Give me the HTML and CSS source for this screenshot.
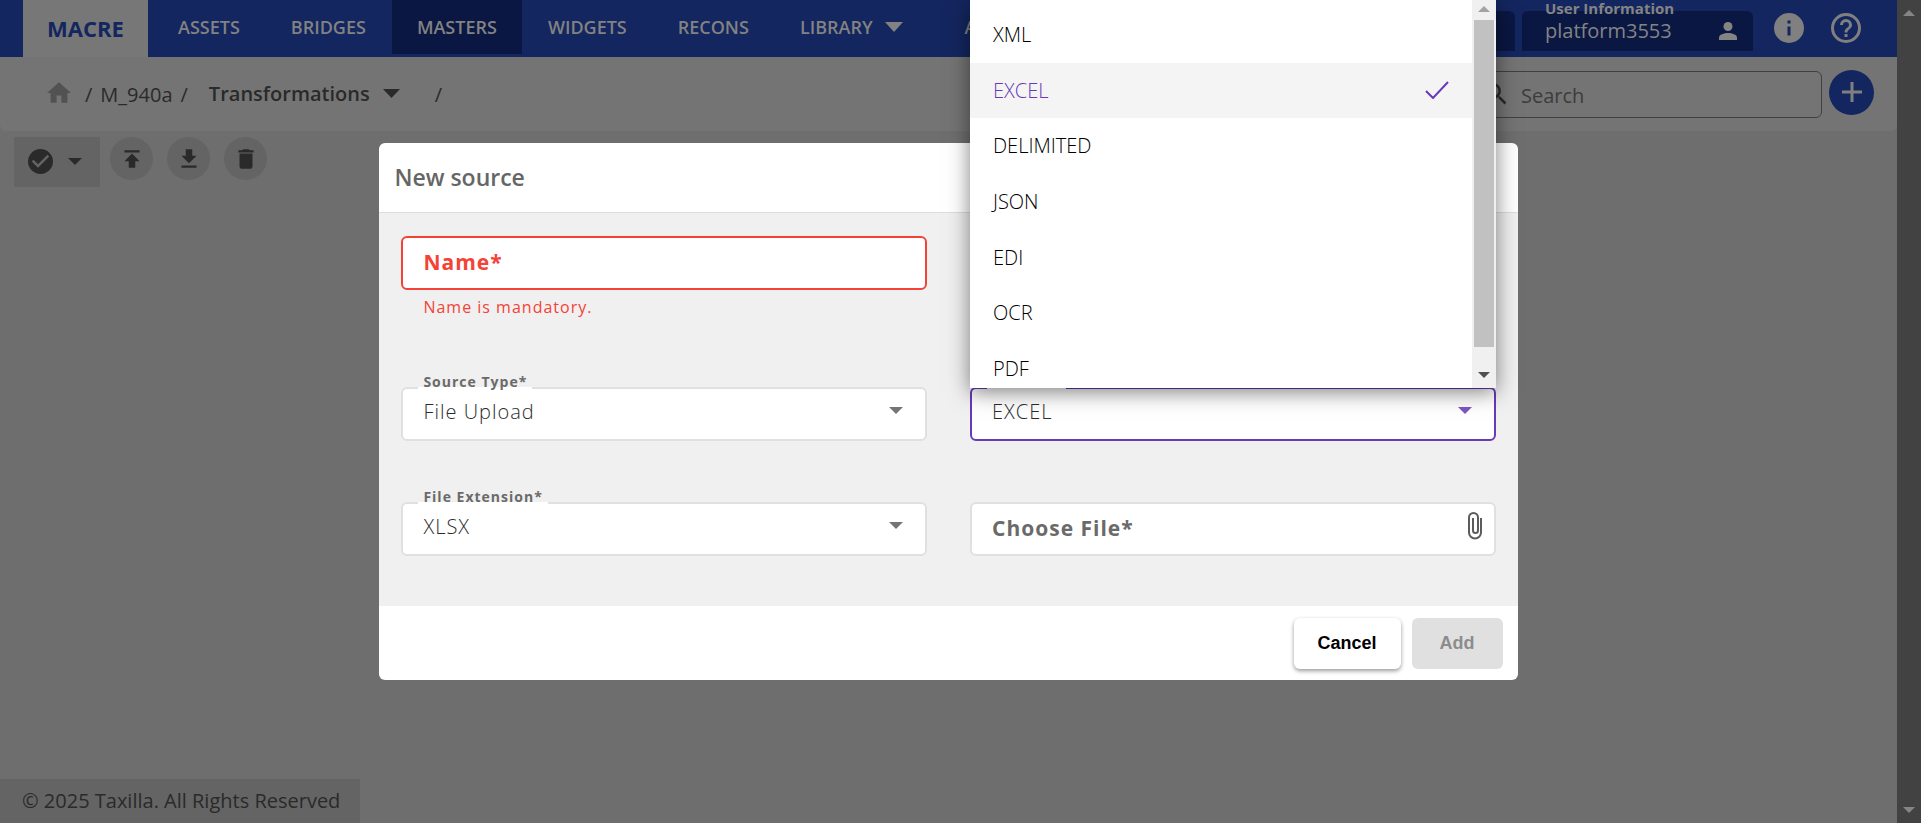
FILE: index.html
```html
<!DOCTYPE html>
<html lang="en">
<head>
<meta charset="utf-8">
<title>Masters - New source</title>
<link rel="stylesheet" href="styles.css">
</head>
<body>
<div class="shell">
  <div class="page">
    <header class="topbar">
      <a class="brand" href="#">MACRE</a>
      <nav class="nav">
        <a class="nav-link" href="#">ASSETS</a>
        <a class="nav-link" href="#">BRIDGES</a>
        <a class="nav-link nav-link-active" href="#">MASTERS</a>
        <a class="nav-link" href="#">WIDGETS</a>
        <a class="nav-link" href="#">RECONS</a>
        <a class="nav-link nav-link-menu" href="#">LIBRARY
          <svg width="18" height="10" viewBox="0 0 18 10"><path d="M0 0h18L9 10z" fill="currentColor"/></svg></a>
        <a class="nav-link" href="#">A</a>
      </nav>
      <div class="account">
        <div class="chip chip-blank"></div>
        <div class="chip">
          <span class="chip-label">User Information</span>
          <span class="chip-value">platform3553</span>
          <svg width="18" height="18" viewBox="0 0 18 18" fill="currentColor"><circle cx="9" cy="4.5" r="4.5"/><path d="M0 18v-2.500C0 12.500 5 11 9 11s9 1.500 9 4.500V18z"/></svg>
        </div>
        <button class="round-icon" type="button" aria-label="Information"><svg width="30" height="30" viewBox="2 2 20 20" fill="currentColor"><path d="M12 2a10 10 0 1 0 0 20 10 10 0 0 0 0-20zm1 15h-2v-6h2zm0-8h-2V7h2z"/></svg></button>
        <button class="round-icon" type="button" aria-label="Help"><svg width="30" height="30" viewBox="2 2 20 20" fill="currentColor"><path d="M11 18h2v-2h-2zm1-16a10 10 0 1 0 0 20 10 10 0 0 0 0-20zm0 18a8 8 0 1 1 0-16 8 8 0 0 1 0 16zm0-14a4 4 0 0 0-4 4h2a2 2 0 1 1 4 0c0 2-3 1.750-3 5h2c0-2.250 3-2.500 3-5a4 4 0 0 0-4-4z"/></svg></button>
      </div>
    </header>

    <div class="crumbbar">
      <div class="crumbs">
        <a class="home" href="#" aria-label="Home"><svg width="24" height="21" viewBox="2 3 20 17" fill="currentColor"><path d="M10 20v-6h4v6h5v-8h3L12 3 2 12h3v8z"/></svg></a>
        <span class="slash">/</span>
        <a class="crumb" href="#">M_940a</a>
        <span class="slash">/</span>
        <button class="crumb-menu" type="button">Transformations
          <svg width="17" height="9" viewBox="0 0 17 9"><path d="M0 0h17L8.500 9z" fill="currentColor"/></svg></button>
        <span class="slash">/</span>
      </div>
      <div class="search">
        <svg width="22" height="22" viewBox="3 3 18 18" fill="currentColor"><path d="M15.500 14h-.79l-.28-.27A6.470 6.470 0 0 0 16 9.500 6.500 6.500 0 1 0 9.500 16c1.610 0 3.090-.59 4.230-1.570l.27.28v.79l5 4.990L20.490 19zm-6 0a4.500 4.500 0 1 1 0-9 4.500 4.500 0 0 1 0 9z"/></svg>
        <input class="search-input" type="text" placeholder="Search" aria-label="Search">
      </div>
      <button class="plus" type="button" aria-label="Add"><svg width="22" height="22" viewBox="0 0 22 22" stroke="currentColor" stroke-width="3"><path d="M11 1v20M1 11h20"/></svg></button>
    </div>

    <div class="tools">
      <button class="select-all" type="button" aria-label="Select">
        <svg width="25" height="25" viewBox="2 2 20 20" fill="currentColor"><path d="M12 2a10 10 0 1 0 0 20 10 10 0 0 0 0-20zm-2 15-5-5 1.410-1.410L10 14.170l7.590-7.590L19 8z"/></svg>
        <svg width="14" height="7" viewBox="0 0 14 7"><path d="M0 0h14L7 7z" fill="currentColor"/></svg>
      </button>
      <button class="tool" type="button" aria-label="Upload"><svg width="26" height="26" viewBox="0 0 24 24" fill="currentColor"><path d="M5 4v2h14V4zm0 10h4v6h6v-6h4l-7-7z"/></svg></button>
      <button class="tool" type="button" aria-label="Download"><svg width="26" height="26" viewBox="0 0 24 24" fill="currentColor"><path d="M19 9h-4V3H9v6H5l7 7zM5 18v2h14v-2z"/></svg></button>
      <button class="tool" type="button" aria-label="Delete"><svg width="26" height="26" viewBox="0 0 24 24" fill="currentColor"><path d="M6 19a2 2 0 0 0 2 2h8a2 2 0 0 0 2-2V7H6zM19 4h-3.500l-1-1h-5l-1 1H5v2h14z"/></svg></button>
    </div>

    <footer class="copyright">© 2025 Taxilla. All Rights Reserved</footer>

    <div class="overlay">
      <form class="modal" role="dialog" aria-labelledby="modal-title">
        <h2 class="modal-title" id="modal-title">New source</h2>
        <div class="modal-body">
          <div class="cell-first">
            <div class="field field-error">
              <label class="inner-label" for="name">Name*</label>
              <input class="control" id="name" type="text">
            </div>
            <p class="error">Name is mandatory.</p>
          </div>
          <div class="field field-left">
            <label class="float-label" for="source-type">Source Type*</label>
            <select class="control" id="source-type"><option>File Upload</option></select>
            <svg class="caret" width="14" height="7" viewBox="0 0 14 7"><path d="M0 0h14L7 7z" fill="currentColor"/></svg>
          </div>
          <div class="field field-focus">
            <span class="float-label notch"></span>
            <select class="control" aria-label="Format"><option>EXCEL</option></select>
            <svg class="caret" width="14" height="7" viewBox="0 0 14 7"><path d="M0 0h14L7 7z" fill="currentColor"/></svg>
            <div class="dropdown">
              <ul class="options" role="listbox" aria-label="Format">
                <li class="option" role="option">XML</li>
                <li class="option option-selected" role="option" aria-selected="true">EXCEL
                  <svg width="24" height="18" viewBox="0 0 24 18" fill="none" stroke="currentColor" stroke-width="2"><path d="M1 10l7 7L23 1"/></svg></li>
                <li class="option" role="option">DELIMITED</li>
                <li class="option" role="option">JSON</li>
                <li class="option" role="option">EDI</li>
                <li class="option" role="option">OCR</li>
                <li class="option" role="option">PDF</li>
              </ul>
              <div class="list-scroll">
                <svg width="12" height="6" viewBox="0 0 12 6"><path d="M0 6h12L6 0z" fill="#a3a3a3"/></svg>
                <div class="list-thumb"></div>
                <svg width="12" height="6" viewBox="0 0 12 6"><path d="M0 0h12L6 6z" fill="#505050"/></svg>
              </div>
            </div>
          </div>
          <div class="field">
            <label class="float-label" for="extension">File Extension*</label>
            <select class="control" id="extension"><option>XLSX</option></select>
            <svg class="caret" width="14" height="7" viewBox="0 0 14 7"><path d="M0 0h14L7 7z" fill="currentColor"/></svg>
          </div>
          <div class="field">
            <label class="inner-label" for="file">Choose File*</label>
            <input class="control" id="file" type="text" readonly>
            <svg class="clip" width="14" height="28" viewBox="0 0 14 28" fill="none" stroke="currentColor" stroke-width="2"><path d="M13 6v14.500a6 6 0 0 1-12 0V5.500a4.500 4.500 0 0 1 9 0V18.500a2.500 2.500 0 0 1-5 0V6"/></svg>
          </div>
        </div>
        <div class="modal-actions">
          <button class="btn" type="button">Cancel</button>
          <button class="btn btn-disabled" type="submit" disabled>Add</button>
        </div>
      </form>
    </div>
  </div>
  <div class="page-scroll">
    <svg width="12" height="6" viewBox="0 0 12 6"><path d="M0 6h12L6 0z" fill="currentColor"/></svg>
    <svg width="12" height="6" viewBox="0 0 12 6"><path d="M0 0h12L6 6z" fill="currentColor"/></svg>
  </div>
</div>
</body>
</html>
```
FILE: styles.css
```css
* { box-sizing: border-box; }
body { margin: 0; font-family: "Open Sans", "Noto Sans", sans-serif; font-size: 20px; color: #2a2a2a; }
button { border: 0; padding: 0; background: none; color: inherit; font: inherit; }
a { color: inherit; text-decoration: none; }
svg { display: block; flex: none; }
.shell { display: flex; min-height: 100vh; background: #6e6e6e; }
.page { flex: 1; min-width: 0; display: flex; flex-direction: column; position: relative; }

.topbar { display: flex; height: 57px; padding-left: 23px; background: #13265f; color: #7f7f7f; }
.brand { display: flex; align-items: center; justify-content: center; width: 125px; padding-bottom: 2px; background: #777777; color: #13265f; font-size: 22px; font-weight: 700; }
.nav { display: flex; gap: 1px; height: 54px; margin-left: 5px; }
.nav-link { display: flex; align-items: center; gap: 12px; padding: 0 25px; font-size: 18px; font-weight: 600; color: #828282; }
.nav-link-active { background: #0a1742; }
.nav-link-menu { padding-right: 36px; }
.account { display: flex; align-items: flex-start; margin-left: auto; padding-right: 36px; }
.chip { position: relative; display: flex; align-items: center; justify-content: space-between; width: 231px; height: 40px; margin: 11px 0 0 7px; padding: 0 16px 0 23px; border-radius: 6px 6px 0 0; background: #0a1742; color: #848484; }
.chip-blank { width: 120px; }
.chip-value { padding-bottom: 2px; }
.chip-label { position: absolute; left: 23px; top: -13px; font-size: 15px; line-height: 20px; font-weight: 700; }
.round-icon { margin-top: 13px; margin-left: 21px; color: #808080; }
.round-icon + .round-icon { margin-left: 27px; }

.crumbbar { display: flex; align-items: center; height: 74px; padding: 0 23px 0 47px; border-radius: 0 0 6px 6px; background: #747474; }
.crumbs { display: flex; align-items: center; flex: 1; }
.home { color: #525252; margin-right: 14px; padding-bottom: 4px; }
.slash { margin-right: 8px; }
.crumb { margin-right: 8px; }
.crumb-menu { display: flex; align-items: center; gap: 13px; margin: 0 35px 0 13px; padding-bottom: 2px; font-weight: 600; }
.search { display: flex; align-items: center; gap: 14px; width: 352px; height: 47px; padding: 0 14px; margin-right: 7px; border: 1px solid #404040; border-radius: 6px; }
.search-input { flex: 1; min-width: 0; border: 0; padding: 2px 0 0; background: none; font: inherit; color: inherit; outline: 0; }
.search-input::placeholder { color: #3c3c3c; opacity: 1; }
.plus { display: grid; place-items: center; width: 45px; height: 45px; margin-bottom: 4px; border-radius: 50%; background: #13265f; color: #808080; }

.tools { display: flex; align-items: flex-start; gap: 14px; padding: 6px 14px; }
.select-all { display: flex; align-items: center; gap: 15px; width: 86px; height: 50px; padding: 0 0 2px 14px; margin-right: -4px; background: #646464; }
.tool { display: grid; place-items: center; width: 43px; height: 43px; border-radius: 50%; background: #646464; }
.copyright { align-self: flex-start; width: 360px; height: 44px; margin-top: auto; padding-left: 22px; line-height: 44px; background: #646464; }

.overlay { position: absolute; inset: 0; display: flex; align-items: center; justify-content: center; }
.modal { width: 60%; border-radius: 6px; background: #ffffff; color: #555555; }
.modal-title { margin: 0; height: 70px; padding-left: 15px; border-bottom: 1px solid #dcdce6; font-size: 23px; line-height: 69px; font-weight: 600; color: #666666; }
.modal-body { display: grid; grid-template-columns: 1fr 1fr; gap: 61px 43px; padding: 23px 22px 50px; background: #f0f0f0; }
.cell-first { height: 90px; }
.field-left { grid-column: 1; }
.field { position: relative; height: 54px; border: 2px solid #e0e0e0; border-radius: 6px; background: #ffffff; }
.field-error { border-color: #f44336; color: #f44336; }
.field-focus { border-color: #673ab7; }
.control { width: 100%; height: 50px; padding: 0 20px 6px; border: 0; outline: 0; appearance: none; background: none; font: inherit; font-weight: 300; letter-spacing: 1px; color: #2c2c2c; }
.inner-label { position: absolute; left: 20px; top: 10px; font-size: 21px; line-height: 28px; font-weight: 700; letter-spacing: 1px; color: #6a6a6a; }
.field-error .inner-label { color: #f44336; }
.float-label { position: absolute; left: 15px; top: -2px; height: 2px; padding: 0 5px; background: #ffffff; font-size: 14px; line-height: 14px; font-weight: 700; letter-spacing: 1px; color: #6a6a6a; display: flex; align-items: flex-end; }
.notch { width: 79px; }
.caret { position: absolute; right: 22px; top: 18px; color: #757575; }
.field-focus .caret { color: #7e57c2; }
.clip { position: absolute; right: 12px; top: 8px; color: #5c5c5c; }
.error { margin: 5px 0 0 22px; font-size: 16px; line-height: 24px; letter-spacing: 1px; color: #f44336; }

.dropdown { position: absolute; z-index: 1; left: -2px; right: -2px; bottom: 51px; height: 388px; display: flex; background: #ffffff; box-shadow: 0 4px 20px rgba(0, 0, 0, 0.5); }
.options { flex: 1; display: grid; grid-auto-rows: 1fr; height: 389px; margin: 7px 0 -8px; padding: 0; list-style: none; font-weight: 300; color: #000000; }
.option { display: flex; align-items: center; justify-content: space-between; padding: 0 23px; }
.option-selected { background: #f4f4f4; color: #673ab7; }
.list-scroll { display: flex; flex-direction: column; align-items: center; justify-content: space-between; width: 24px; padding: 6px 2px 10px; background: #f0f0f0; }
.list-thumb { width: 100%; flex: 1; margin: 8px 0 25px; background: #c1c1c1; }

.modal-actions { display: flex; justify-content: flex-end; gap: 11px; padding: 12px 15px 11px; }
.btn { height: 51px; padding: 0 24px; border-radius: 6px; background: #ffffff; color: #000000; font-family: "Liberation Sans", Arial, sans-serif; font-size: 18px; font-weight: 700; box-shadow: 0 2px 4px rgba(0, 0, 0, 0.4); }
.btn-disabled { padding: 0 28px; background: #e0e0e0; color: #8c8c8c; box-shadow: none; }

.page-scroll { display: flex; flex-direction: column; align-items: center; justify-content: space-between; width: 24px; padding: 10px 0; background: #424242; color: #858585; }
```
